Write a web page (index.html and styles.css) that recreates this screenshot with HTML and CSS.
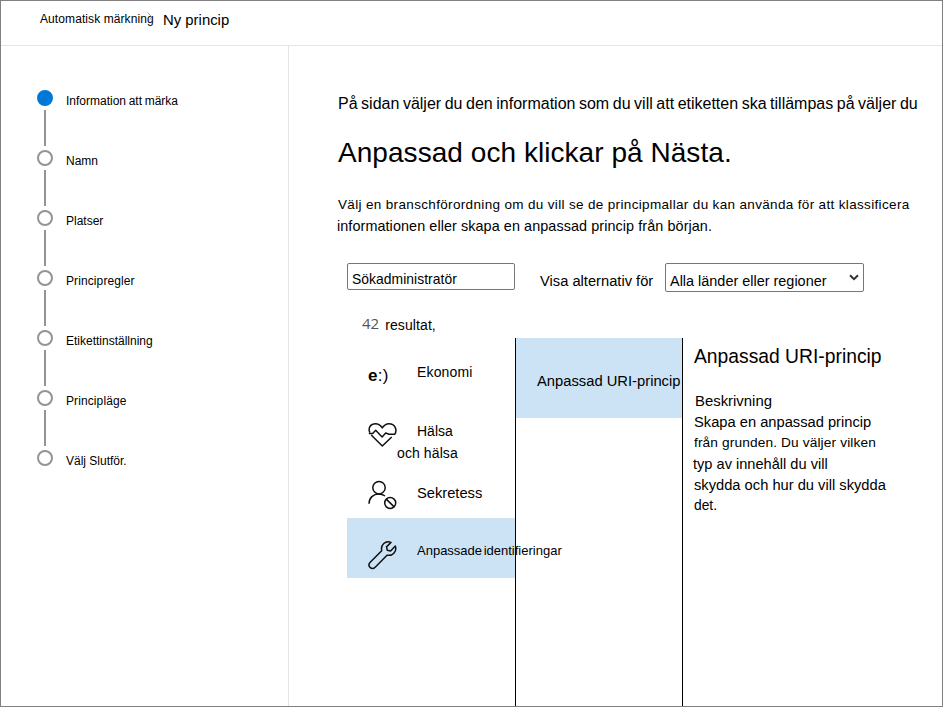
FILE: index.html
```html
<!DOCTYPE html>
<html lang="sv">
<head>
<meta charset="utf-8">
<title>Ny princip</title>
<link rel="stylesheet" href="styles.css">
</head>
<body>
<div class="window">
  <header class="topbar">
    <span class="crumb">Automatisk märkning<svg class="crumb-arrow" viewBox="0 0 6 10"><path d="M.5.5 5 5 2.5 8"/></svg></span>
    <span class="crumb-current">Ny princip</span>
  </header>
  <div class="body">
    <nav class="sidebar">
      <ol class="steps">
        <li class="step active"><span class="track"></span><span class="step-label first">Information att märka</span></li>
        <li class="step"><span class="track"></span><span class="step-label">Namn</span></li>
        <li class="step"><span class="track"></span><span class="step-label">Platser</span></li>
        <li class="step"><span class="track"></span><span class="step-label wide">Principregler</span></li>
        <li class="step"><span class="track"></span><span class="step-label">Etikettinställning</span></li>
        <li class="step"><span class="track"></span><span class="step-label wide">Principläge</span></li>
        <li class="step"><span class="track"></span><span class="step-label">Välj Slutför.</span></li>
      </ol>
    </nav>
    <main class="main">
      <p class="lead">På sidan väljer du den information som du vill att etiketten ska tillämpas på väljer du</p>
      <h1 class="title">Anpassad och klickar på Nästa.</h1>
      <p class="intro"><span class="intro-a">Välj en branschförordning om du vill se de principmallar du kan använda för att klassificera</span><span class="intro-b">informationen eller skapa en anpassad princip från början.</span></p>
      <div class="filters">
        <input class="search" type="text" value="Sökadministratör">
        <label class="filter-label" for="region">Visa alternativ för</label>
        <div class="select-wrap">
          <select class="select" id="region"><option>Alla länder eller regioner</option></select>
          <svg class="caret" viewBox="0 0 10 7"><path d="M1 1.2 5 5.2 9 1.2"/></svg>
        </div>
      </div>
      <div class="count"><span class="count-num">42</span><span class="count-text">resultat,</span></div>
      <div class="picker">
        <ul class="categories">
          <li class="category"><span class="glyph"><b>e</b>:)</span><span class="cat-label finance">Ekonomi</span></li>
          <li class="category">
            <svg class="icon" viewBox="0 0 30 30"><path d="M1.800 12.500C-.2 7.500 2.800 3.700 7.500 3.700c3.200 0 5.200 1.600 6.800 4.200 1.600-2.600 3.500-4.200 6.700-4.200 6 0 8.600 6.300 5.700 10.600H21L17.700 13 14.100 17 7.700 10.300 4.700 13.500H.8M3.200 15 14.300 26 23.700 17"/></svg>
            <span class="cat-label health">Hälsa<br><span class="outdent">och hälsa</span></span>
          </li>
          <li class="category">
            <svg class="icon" viewBox="0 0 30 30"><circle cx="11" cy="7.700" r="6.200"/><path d="M1 23.700C1 17.800 5.500 14 10.700 14c2.500 0 4.500.7 6.300 2"/><circle cx="22.200" cy="23" r="5.500"/><path d="m18.300 19.100 7.800 7.800"/></svg>
            <span class="cat-label privacy">Sekretess</span>
          </li>
          <li class="category selected">
            <svg class="icon" viewBox="0 0 30 30"><path d="M23 2.400 18.500 6.900l.8 3.300 3.300.8 4.700-4.900c1.800 5-2.300 10.200-8.300 9.100L7.200 27.200c-3.500 3.500-8.500-1.300-5-5L13.700 10.700C12.500 4.900 17.300.1 23 2.400Z"/></svg>
            <span class="cat-label custom">Anpassade identifieringar</span>
          </li>
        </ul>
        <div class="templates"><div class="template">Anpassad URI-princip</div></div>
        <section class="detail">
          <h2 class="detail-title">Anpassad URI-princip</h2>
          <h3 class="detail-sub">Beskrivning</h3>
          <p class="detail-text"><span class="d1">Skapa en anpassad princip</span><span class="d2">från grunden. Du väljer vilken</span><span class="d3">typ av innehåll du vill</span><span class="d4">skydda och hur du vill skydda</span><span class="d5">det.</span></p>
        </section>
      </div>
    </main>
  </div>
</div>
</body>
</html>
```
FILE: styles.css
```css
*, *::before, *::after { box-sizing: border-box; margin: 0; padding: 0; }
body { font-family: "Liberation Sans", Arial, sans-serif; font-size: 14px; line-height: 20px; color: #000; background: #fff; }
ul, ol { list-style: none; }
.window { width: 943px; height: 707px; border: 1px solid #808080; display: flex; flex-direction: column; overflow: hidden; white-space: nowrap; }

.topbar { height: 45px; border-bottom: 1px solid #e5e5e5; display: flex; align-items: flex-start; padding-left: 39px; }
.crumb { position: relative; width: 123px; padding-top: 8px; font-size: 12px; letter-spacing: .09px; }
.crumb-arrow { position: absolute; left: 107px; top: 11px; width: 6px; height: 10px; fill: none; stroke: #999; stroke-width: .9; }
.crumb-current { padding-top: 9px; font-size: 14.900px; }

.body { flex: 1; display: flex; min-height: 0; }
.sidebar { width: 288px; border-right: 1px solid #e5e5e5; padding: 44px 0 0 36px; }
.step { display: flex; gap: 13px; height: 60px; }
.track { width: 16px; display: flex; flex-direction: column; align-items: center; gap: 4px; }
.track::before { content: ""; width: 16px; height: 16px; border: 2px solid #949494; border-radius: 50%; }
.track::after { content: ""; width: 2px; height: 36px; background: #949494; }
.step:last-child .track::after { display: none; }
.active .track::before { background: #0078d7; border-color: #0078d7; }
.step-label { padding-top: 1px; font-size: 12px; }
.first { word-spacing: -.7px; }
.wide { letter-spacing: .1px; }

.main { flex: 1; padding: 48px 0 0 49px; display: flex; flex-direction: column; }
.lead { font-size: 16px; word-spacing: -.9px; }
.title { margin-top: 21px; font-size: 28px; line-height: 36px; font-weight: 400; letter-spacing: .05px; }
.intro { margin-top: 22px; line-height: 22px; }
.intro span { display: block; }
.intro-a { padding-top: 1px; margin-bottom: -1px; font-size: 13.500px; letter-spacing: .34px; }
.intro-b { font-size: 14.400px; letter-spacing: .08px; margin-left: -1px; }

.filters { display: flex; align-items: flex-start; margin: 26px 0 0 9px; height: 29px; }
.search { width: 168px; height: 27px; border: 1px solid #767676; border-radius: 2px; padding: 5px 4px 0; font: 13.900px "Liberation Sans", Arial, sans-serif; letter-spacing: .04px; color: #000; }
.filter-label { width: 125px; margin-left: 25px; padding-top: 8px; font-size: 14.700px; }
.select-wrap { position: relative; width: 199px; height: 29px; }
.select { appearance: none; width: 199px; height: 29px; border: 1px solid #767676; border-radius: 2px; padding: 7px 4px 0; background: #fff; font: 14.450px "Liberation Sans", Arial, sans-serif; color: #000; }
.caret { position: absolute; left: 184px; top: 11px; width: 10px; height: 7px; fill: none; stroke: #333; stroke-width: 2; }

.count { display: flex; margin: 21px 0 0 24px; height: 25px; gap: 6px; }
.count-num { font-family: "Open Sans", sans-serif; font-size: 15px; color: #555; }
.count-text { padding-top: 2px; letter-spacing: .1px; }

.picker { flex: 1; display: flex; margin-left: 9px; }
.categories { width: 168px; }
.category { height: 60px; display: flex; padding-left: 21px; }
.selected { background: #cce3f6; }
.icon { width: 30px; height: 30px; margin-top: 22px; flex: none; fill: none; stroke: #111; stroke-width: 1.500; stroke-linejoin: round; }
.glyph { width: 30px; padding-top: 28px; font-size: 17px; letter-spacing: .3px; }
.cat-label { margin-left: 19px; }
.finance { padding-top: 24px; letter-spacing: .15px; }
.health { padding-top: 22px; line-height: 22px; }
.outdent { margin-left: -20px; letter-spacing: .1px; }
.privacy { padding-top: 25px; font-size: 14.700px; }
.custom { padding-top: 23px; font-size: 13px; word-spacing: -2px; }
.templates { width: 168px; border: solid #000; border-width: 0 1px; }
.template { height: 80px; padding: 33px 0 0 21px; background: #cce3f6; font-size: 14.750px; }
.detail { padding: 7px 0 0 11px; }
.detail-title { font-size: 19.300px; line-height: 24px; font-weight: 400; }
.detail-sub { margin: 21px 0 0 1px; font-size: 14.900px; line-height: 22px; font-weight: 400; }
.detail-text { line-height: 21px; font-size: 14.700px; }
.detail-text span { display: block; }
.detail-text .d2 { margin-top: -1px; margin-bottom: 1px; font-size: 13.700px; letter-spacing: .13px; }
.detail-text .d3 { margin-left: -1px; font-size: 14.600px; }
.detail-text .d5 { margin-top: -1px; font-size: 13.800px; }
```
